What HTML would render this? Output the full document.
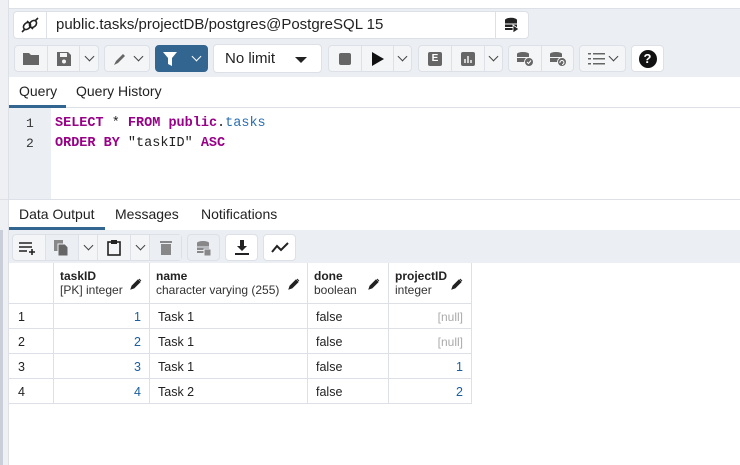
<!DOCTYPE html>
<html><head><meta charset="utf-8"><style>
*{box-sizing:border-box;margin:0;padding:0}
body{width:740px;height:465px;overflow:hidden;background:#fff;font-family:"Liberation Sans",sans-serif;font-size:14px;color:#222;position:relative}
.abs{position:absolute}
.btn{position:absolute;height:27px;border:1px solid #dde0e6;border-radius:4px;background:#f4f5f7;display:flex;align-items:center;justify-content:center}
.seg{height:100%;display:flex;align-items:center;justify-content:center;border-right:1px solid #dde0e6}
.seg:last-child{border-right:none}
.chev{width:7px;height:7px;border-right:1.5px solid #444;border-bottom:1.5px solid #444;transform:rotate(45deg);margin-top:-4px}
.g{position:absolute;border-right:1px solid #dde0e6;border-bottom:1px solid #dde0e6;font-size:12.5px}
.hd b{font-weight:bold;display:block;font-size:12px;color:#222}
.hd span{font-size:12px;color:#333}
.k{color:#990088;font-weight:bold}
</style></head><body>
<div class="abs" style="left:0;top:0;width:9px;height:465px;background:#eef0f3;border-right:1px solid #dde0e6"></div>
<div class="abs" style="left:0;top:230px;width:3px;height:235px;background:#c9ced8"></div>
<div class="abs" style="left:9px;top:8px;width:731px;height:69px;background:#ebeef3;border-top:1px solid #dde0e6"></div>
<div class="abs" style="left:13px;top:11px;width:516px;height:28px;border:1px solid #dde0e6;border-radius:4px;background:#fff;display:flex">
 <div style="width:33px;border-right:1px solid #dde0e6;display:flex;align-items:center;justify-content:center">
  <svg width="18" height="16" viewBox="0 0 18 16"><g fill="none" stroke="#222" stroke-width="1.6"><ellipse cx="6" cy="9" rx="3" ry="4" transform="rotate(45 6 9)"/><ellipse cx="12" cy="7" rx="3" ry="4" transform="rotate(45 12 7)"/><path d="M1 15l3-3M14 4l3-3M6 4l2 2M10 10l2 2"/></g></svg></div>
 <div style="flex:1;padding-left:9px;line-height:26px;font-size:15px;color:#222">public.tasks/projectDB/postgres@PostgreSQL 15</div>
 <div style="width:33px;border-left:1px solid #dde0e6;display:flex;align-items:center;justify-content:center">
  <svg width="16" height="16" viewBox="0 0 16 16"><ellipse cx="7" cy="3" rx="6" ry="2.2" fill="#222"/><rect x="1" y="3" width="12" height="10" fill="#222"/><path d="M1 7h12M1 10.5h12" stroke="#fff"/><path d="M9 8l6 4-6 4z" fill="#222" stroke="#fff" stroke-width=".8"/></svg></div>
</div>
<div class="btn" style="left:14px;top:45px;width:85px;display:flex">
 <div class="seg" style="width:33px"><svg width="16" height="13"><path d="M0 1h6l2 2h8v10H0z" fill="#666"/></svg></div>
 <div class="seg" style="width:32px"><svg width="14" height="14"><path d="M0 0h11l3 3v11H0z" fill="#666"/><rect x="3" y="1" width="7" height="4" fill="#f4f5f7"/><circle cx="7" cy="9.5" r="2" fill="#f4f5f7"/></svg></div>
 <div class="seg" style="flex:1"><div class="chev"></div></div>
</div>
<div class="btn" style="left:104px;top:45px;width:46px"><svg width="18" height="14"><path d="M1 13l2-4 7-7 2 2-7 7z" fill="#666"/></svg><div class="chev" style="margin-left:4px"></div></div>
<div class="btn" style="left:155px;top:45px;width:53px;background:#326690;border-color:#326690"><svg width="14" height="14"><path d="M0 0h14L9 6v8L5 12V6z" fill="#fff"/></svg><div class="chev" style="margin-left:16px;border-color:#fff"></div></div>
<div class="btn" style="left:213px;top:44px;width:109px;height:29px;background:#fff;justify-content:flex-start;padding-left:11px;font-size:15px">No limit<div style="position:absolute;right:14px;top:12px;border-left:6px solid transparent;border-right:6px solid transparent;border-top:6px solid #222"></div></div>
<div class="btn" style="left:328px;top:45px;width:84px">
 <div class="seg" style="width:33px"><div style="width:12px;height:12px;background:#666;border-radius:2px"></div></div>
 <div class="seg" style="width:32px"><div style="border-left:12px solid #111;border-top:7px solid transparent;border-bottom:7px solid transparent"></div></div>
 <div class="seg" style="flex:1"><div class="chev"></div></div>
</div>
<div class="btn" style="left:418px;top:45px;width:85px">
 <div class="seg" style="width:33px"><div style="width:14px;height:14px;background:#666;border-radius:2px;color:#fff;font-size:10px;font-weight:bold;text-align:center;line-height:14px">E</div></div>
 <div class="seg" style="width:33px"><svg width="14" height="14"><rect width="14" height="14" rx="2" fill="#666"/><path d="M4 11V7M7 11V4M10 11V8" stroke="#fff" stroke-width="1.4"/></svg></div>
 <div class="seg" style="flex:1"><div class="chev"></div></div>
</div>
<div class="btn" style="left:508px;top:45px;width:66px">
 <div class="seg" style="width:33px"><svg width="18" height="16"><ellipse cx="7" cy="3" rx="6" ry="2" fill="#666"/><rect x="1" y="3" width="12" height="8" fill="#666"/><path d="M1 6.5h12" stroke="#f4f5f7"/><circle cx="13" cy="11" r="4.5" fill="#666" stroke="#f4f5f7"/><path d="M11 11l1.5 1.5 2.5-3" stroke="#fff" fill="none"/></svg></div>
 <div class="seg" style="flex:1"><svg width="18" height="16"><ellipse cx="7" cy="3" rx="6" ry="2" fill="#666"/><rect x="1" y="3" width="12" height="8" fill="#666"/><path d="M1 6.5h12" stroke="#f4f5f7"/><circle cx="13" cy="11" r="4.5" fill="#666" stroke="#f4f5f7"/><path d="M11 12a2 2 0 1 1 2 1.5" stroke="#fff" fill="none"/></svg></div>
</div>
<div class="btn" style="left:579px;top:45px;width:47px"><svg width="20" height="14"><g fill="#666"><rect x="0" y="1" width="3" height="1.5"/><rect x="0" y="6" width="3" height="1.5"/><rect x="0" y="11" width="3" height="1.5"/><rect x="5" y="1" width="12" height="1.5"/><rect x="5" y="6" width="12" height="1.5"/><rect x="5" y="11" width="12" height="1.5"/></g></svg><div class="chev" style="margin-left:2px"></div></div>
<div class="btn" style="left:631px;top:45px;width:33px;background:#fff"><div style="width:18px;height:18px;border-radius:50%;background:#111;color:#fff;font-weight:bold;font-size:13px;text-align:center;line-height:18px">?</div></div>
<div class="abs" style="left:9px;top:77px;width:731px;height:31px;border-bottom:1px solid #dde0e6"></div>
<div class="abs" style="left:19px;top:83px;font-size:14px">Query</div>
<div class="abs" style="left:76px;top:83px;font-size:14px">Query History</div>
<div class="abs" style="left:9px;top:105px;width:57px;height:3px;background:#326690"></div>
<div class="abs" style="left:9px;top:108px;width:42px;height:91px;background:#ebeef3"></div>
<div class="abs" style="left:0;top:199px;width:740px;height:1px;background:#dde0e6"></div>
<div class="abs" style="left:26px;top:114px;font-family:'Liberation Mono',monospace;font-size:13px;line-height:20px;color:#333">1<br>2</div>
<div class="abs" style="left:55px;top:114px;font-family:'Liberation Mono',monospace;font-size:13.5px;line-height:20px;color:#222;white-space:pre"><span class="k">SELECT</span> * <span class="k">FROM</span> <span class="k">public</span>.<span style="color:#2a6fb0">tasks</span>
<span class="k">ORDER BY</span> "taskID" <span class="k">ASC</span></div>
<div class="abs" style="left:19px;top:206px">Data Output</div>
<div class="abs" style="left:115px;top:206px">Messages</div>
<div class="abs" style="left:201px;top:206px">Notifications</div>
<div class="abs" style="left:9px;top:227px;width:96px;height:3px;background:#326690"></div>
<div class="abs" style="left:9px;top:230px;width:731px;height:33px;background:#ebeef3"></div>
<div class="btn" style="left:12px;top:234px;width:170px">
 <div class="seg" style="width:33px"><svg width="20" height="14"><path d="M0 2h13M0 6h13M0 10h8M13 8v6M10 11h6" stroke="#222" stroke-width="1.6"/></svg></div>
 <div class="seg" style="width:33px;background:#ebeef3"><svg width="16" height="16"><rect x="0" y="0" width="9" height="11" fill="#888"/><path d="M4 4h7l3 3v9H4z" fill="#666" stroke="#ebeef3"/></svg></div>
 <div class="seg" style="width:19px"><div class="chev"></div></div>
 <div class="seg" style="width:33px"><svg width="14" height="17"><rect x="1" y="3" width="12" height="13" fill="none" stroke="#222" stroke-width="1.6"/><rect x="4" y="1" width="6" height="4" fill="#222"/></svg></div>
 <div class="seg" style="width:19px"><div class="chev"></div></div>
 <div class="seg" style="flex:1;background:#ebeef3"><svg width="12" height="15"><rect x="0" y="1" width="12" height="2" fill="#888"/><rect x="1" y="4" width="10" height="11" fill="#888"/></svg></div>
</div>
<div class="btn" style="left:187px;top:234px;width:33px;background:#ebeef3"><svg width="16" height="16"><ellipse cx="7" cy="3" rx="6" ry="2" fill="#888"/><rect x="1" y="3" width="12" height="10" fill="#888"/><path d="M1 7h12M1 10.5h12" stroke="#ebeef3"/><rect x="8" y="9" width="7" height="7" fill="#888" stroke="#ebeef3"/></svg></div>
<div class="btn" style="left:225px;top:234px;width:33px;background:#fff"><svg width="14" height="15"><path d="M5 0h4v6h3l-5 5-5-5h3z" fill="#222"/><rect x="0" y="13" width="14" height="2" fill="#222"/></svg></div>
<div class="btn" style="left:263px;top:234px;width:33px;background:#fff"><svg width="18" height="12"><path d="M1 10l5-6 4 4 7-7" fill="none" stroke="#222" stroke-width="2"/></svg></div>
<div class="g" style="left:9px;top:263px;width:45px;height:41px"></div>
<div class="g hd" style="left:54px;top:263px;width:96px;height:41px;padding:6px 0 0 6px"><b>taskID</b><span>[PK] integer</span></div>
<div class="g hd" style="left:150px;top:263px;width:158px;height:41px;padding:6px 0 0 6px"><b>name</b><span>character varying (255)</span></div>
<div class="g hd" style="left:308px;top:263px;width:81px;height:41px;padding:6px 0 0 6px"><b>done</b><span>boolean</span></div>
<div class="g hd" style="left:389px;top:263px;width:83px;height:41px;padding:6px 0 0 6px"><b>projectID</b><span>integer</span></div>
<svg class="abs" style="left:130px;top:278px" width="12" height="12"><path d="M1 11l1-3 6-6 2 2-6 6z M9 1l2 2" fill="#222" stroke="#222"/></svg>
<svg class="abs" style="left:288px;top:278px" width="12" height="12"><path d="M1 11l1-3 6-6 2 2-6 6z M9 1l2 2" fill="#222" stroke="#222"/></svg>
<svg class="abs" style="left:368px;top:278px" width="12" height="12"><path d="M1 11l1-3 6-6 2 2-6 6z M9 1l2 2" fill="#222" stroke="#222"/></svg>
<svg class="abs" style="left:451px;top:278px" width="12" height="12"><path d="M1 11l1-3 6-6 2 2-6 6z M9 1l2 2" fill="#222" stroke="#222"/></svg>
<div id="rows"></div>
<script>
var d=[["1","1","Task 1","false","[null]"],["2","2","Task 1","false","[null]"],["3","3","Task 1","false","1"],["4","4","Task 2","false","2"]];
var h="";d.forEach(function(r,i){var t=304+i*25;
h+='<div class="g" style="left:9px;top:'+t+'px;width:45px;height:25px;padding:6px 0 0 9px;color:#222">'+r[0]+'</div>';
h+='<div class="g" style="left:54px;top:'+t+'px;width:96px;height:25px;padding:6px 8px 0 0;text-align:right;color:#1a5fa0">'+r[1]+'</div>';
h+='<div class="g" style="left:150px;top:'+t+'px;width:158px;height:25px;padding:6px 0 0 8px">'+r[2]+'</div>';
h+='<div class="g" style="left:308px;top:'+t+'px;width:81px;height:25px;padding:6px 0 0 8px">'+r[3]+'</div>';
h+='<div class="g" style="left:389px;top:'+t+'px;width:83px;height:25px;padding:6px 8px 0 0;text-align:right;'+(r[4]=="[null]"?'color:#aaa;font-size:12px':'color:#1a5fa0')+'">'+r[4]+'</div>';});
document.getElementById("rows").innerHTML=h;
</script>
</body></html>
